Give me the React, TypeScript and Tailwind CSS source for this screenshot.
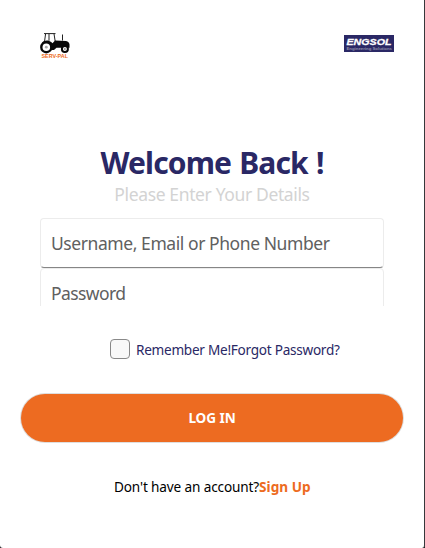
function TractorLogo() {
  return (
    <svg width="32" height="28" viewBox="0 0 32 28" aria-label="SERV-PAL">
      <g fill="none" stroke="#222" strokeWidth="1">
        <path d="M5 1.6h11.5M6.6 1.8L5.6 9M10 1.8v7M15 1.8l1.2 7.5M23.5 2.5v6" />
      </g>
      <path fill="#080808" d="M3 10.5c2-2.4 6.5-2.8 9.2-.4l1.3 1.2 2.5-2.8 11 .5c2.2.4 3.3 1.5 3.5 3.6v3.2H17.5L15 18h-3z" />
      <circle cx="7.3" cy="15.2" r="5" fill="#fff" stroke="#080808" strokeWidth="2.4" />
      <circle cx="7.3" cy="15.2" r="1.4" fill="#aaa" />
      <circle cx="25.9" cy="17" r="3" fill="#fff" stroke="#080808" strokeWidth="2" />
      <circle cx="25.9" cy="17" r=".9" fill="#888" />
      <text x="2.5" y="25.5" fill="#ed6b21" fontSize="5.4" fontWeight="700" textLength="26.5" lengthAdjust="spacingAndGlyphs" fontFamily="Liberation Sans, sans-serif">SERV-PAL</text>
    </svg>
  );
}

function EngsolLogo() {
  return (
    <svg width="50" height="17" viewBox="0 0 50 17" aria-label="ENGSOL Engineering Solutions">
      <rect width="50" height="17" fill="#2a2865" />
      <text x="2.5" y="9.6" fill="#fff" stroke="#fff" strokeWidth=".3" fontSize="9.8" fontWeight="700" fontStyle="italic" textLength="45" lengthAdjust="spacingAndGlyphs" fontFamily="Liberation Sans, sans-serif">ENGSOL</text>
      <text x="2.5" y="14.5" fill="#9290ab" fontSize="4.2" fontWeight="700" textLength="45.5" lengthAdjust="spacingAndGlyphs" fontFamily="Liberation Sans, sans-serif">Engineering Solutions</text>
    </svg>
  );
}

export default function App() {
  return (
    <div className="h-[548px] w-[425px] overflow-hidden bg-[#202124]">
      <main className="flex h-full w-[425px] flex-col overflow-hidden rounded-b-[3px] border-r border-[#36383b] bg-white font-['Noto_Sans',sans-serif] whitespace-nowrap">
        <header className="flex h-[146px] shrink-0 items-start justify-between pt-[32px] pr-[30px] pl-[39px]">
          <TractorLogo />
          <div className="pt-[3px]"><EngsolLogo /></div>
        </header>
        <h1 className="h-[36px] shrink-0 text-center text-[30px] leading-[34px] font-bold tracking-[-0.86px] text-[#2a2865] [word-spacing:1.2px]">Welcome Back !</h1>
        <p className="h-[36px] shrink-0 text-center text-[17.5px] leading-[25px] tracking-[-0.37px] text-[#d3d3d3]">Please Enter Your Details</p>
        <form className="flex h-[88px] shrink-0 flex-col overflow-hidden px-10 text-[17.5px] tracking-[-0.43px] text-[#606060]">
          <div className="h-[50px] w-[344px] shrink-0 rounded-[4px] border border-[#ececec] border-b-[#868686] pl-[10px] leading-[49px]"><span>Username, Email or Phone Number</span></div>
          <div className="h-[50px] w-[344px] shrink-0 rounded-[4px] border border-[#ececec] pl-[10px] leading-[49px] tracking-[-0.6px]"><span>Password</span></div>
        </form>
        <div className="flex h-[88px] shrink-0 items-start pt-[33px] pl-[110px] text-[13.6px] leading-[22px] tracking-[-0.27px] text-[#2a2865]">
          <span className="mr-[6px] size-5 rounded-[4px] border border-[#898989] bg-[#f9f9f9]" />
          <span>Remember Me!</span><span>Forgot Password?</span>
        </div>
        <button className="mx-[21px] h-[48px] w-[382px] shrink-0 rounded-full bg-[#ed6b21] text-[13.6px] leading-[48px] font-bold tracking-[-0.1px] text-white shadow-[0_0_0_1px_#dedede]">LOG IN</button>
        <p className="mt-[34px] pl-[114px] text-[13.6px] leading-[22px] tracking-[-0.14px] text-black"><span>Don't have an account?</span><span className="font-bold tracking-[0.02px] text-[#ed6b21]">Sign Up</span></p>
      </main>
    </div>
  );
}
